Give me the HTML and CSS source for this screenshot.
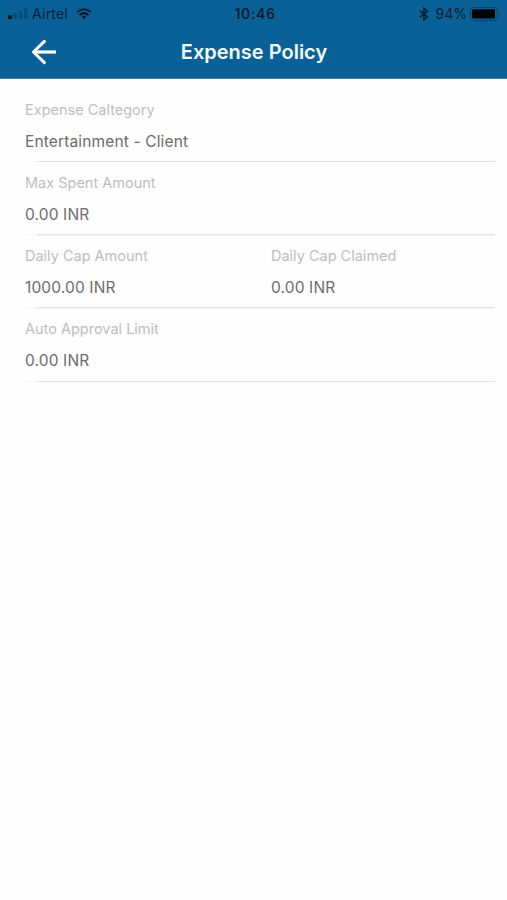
FILE: index.html
```html
<!DOCTYPE html>
<html lang="en">
<head>
<meta charset="utf-8">
<title>Expense Policy</title>
<link rel="stylesheet" href="styles.css">
</head>
<body>
<header class="header">
  <div class="status">
    <div class="carrier">
      <svg class="signal" width="20" height="12" viewBox="0 0 20 12"><path d="M0 7.2h4V11H0z" fill="#021322"/><path d="M5.5 5h3.6v6H5.5zM10.7 3h3.6v8h-3.6zM16 .8h3.6V11H16z" fill="#074d79"/></svg>
      <span class="carrier-name">Airtel</span>
      <svg class="wifi" width="16" height="12" viewBox="0 0 16 12" fill="none" stroke="#021322" stroke-width="2"><path d="M1 4.2Q8-1.8 15 4.2" stroke="#03243d"/><path d="M3.6 7Q8 3.2 12.4 7"/><path d="M5.6 8.8Q8 6.8 10.4 8.8L8 11.2z" fill="#021322" stroke="none"/></svg>
    </div>
    <time class="clock">10:46</time>
    <div class="power">
      <svg class="bluetooth" width="10" height="14" viewBox="0 0 10 14" fill="none" stroke="#021d33" stroke-width="1.5"><path d="M1 3.8l7.5 6L5 12.8V1.2l3.5 3L1 10.2"/></svg>
      <span class="percent">94%</span>
      <svg class="battery" width="32" height="14" viewBox="0 0 32 14"><rect x=".5" y=".5" width="27" height="13" rx="3" fill="none" stroke="#06436c"/><rect x="2" y="2.2" width="23" height="9.4" rx="1" fill="#000408"/><path d="M29.5 5q1.8 2 0 4z" fill="#06436c"/></svg>
    </div>
  </div>
  <div class="navbar">
    <svg class="back" width="26" height="26" viewBox="0 0 26 26" fill="none" stroke="#fff" stroke-width="3" stroke-linecap="round" stroke-linejoin="round"><path d="M13.4 2.4L2.5 13l10.9 10.6"/><path d="M3 13h22" stroke-linecap="butt" stroke-width="3.2"/></svg>
    <h1 class="title">Expense Policy</h1>
  </div>
</header>
<main class="policy">
  <section class="row">
    <div class="field"><div class="label">Expense Caltegory</div><div class="value">Entertainment - Client</div></div>
  </section>
  <section class="row">
    <div class="field"><div class="label">Max Spent Amount</div><div class="value">0.00 INR</div></div>
  </section>
  <section class="row">
    <div class="field"><div class="label">Daily Cap Amount</div><div class="value">1000.00 INR</div></div>
    <div class="field"><div class="label">Daily Cap Claimed</div><div class="value">0.00 INR</div></div>
  </section>
  <section class="row">
    <div class="field"><div class="label">Auto Approval Limit</div><div class="value">0.00 INR</div></div>
  </section>
</main>
</body>
</html>
```
FILE: styles.css
```css
* { box-sizing: border-box; }
body {
  margin: 0;
  min-height: 900px;
  background: #fefefe;
  font-family: Inter, "Liberation Sans", sans-serif;
}
svg { display: block; flex: none; }
.header {
  height: 79px;
  background: #0a6197;
  border-bottom: 1px solid #43799b;
}
.status {
  display: grid;
  grid-template-columns: 1fr auto 1fr;
  align-items: center;
  height: 27px;
  padding: 0 5px 0 8px;
  color: #021d33;
  font-size: 14px;
  line-height: 27px;
}
.carrier, .power { display: flex; align-items: center; }
.carrier-name { margin-left: 4px; letter-spacing: 0.25px; }
.wifi { margin-left: 8px; }
.clock { font-weight: 600; letter-spacing: 0.6px; }
.power { justify-content: flex-end; }
.percent { margin: 0 3px 0 7px; }
.navbar {
  display: grid;
  grid-template-columns: 150px 1fr 150px;
  align-items: center;
  height: 50px;
}
.back { margin-left: 31px; }
.title {
  margin: 0;
  padding-left: 1px;
  color: #f2fbff;
  font-size: 20px;
  font-weight: 600;
  line-height: 26px;
  text-align: center;
  white-space: nowrap;
}
.policy { padding: 10px 12px 0 25px; }
.row {
  display: grid;
  grid-template-columns: 246px 1fr;
  height: 73.3px;
  padding-top: 8.6px;
  background: linear-gradient(90deg, #f7f7f7 12px, #e3e3e3 12px) bottom / 100% 1.5px no-repeat;
}
.label {
  height: 24px;
  color: #bdbdbd;
  font-size: 14.5px;
  line-height: 24px;
}
.value {
  margin-top: 8px;
  height: 24px;
  color: #6c6c6c;
  font-size: 15.5px;
  letter-spacing: 0.14px;
  line-height: 24px;
}
```
